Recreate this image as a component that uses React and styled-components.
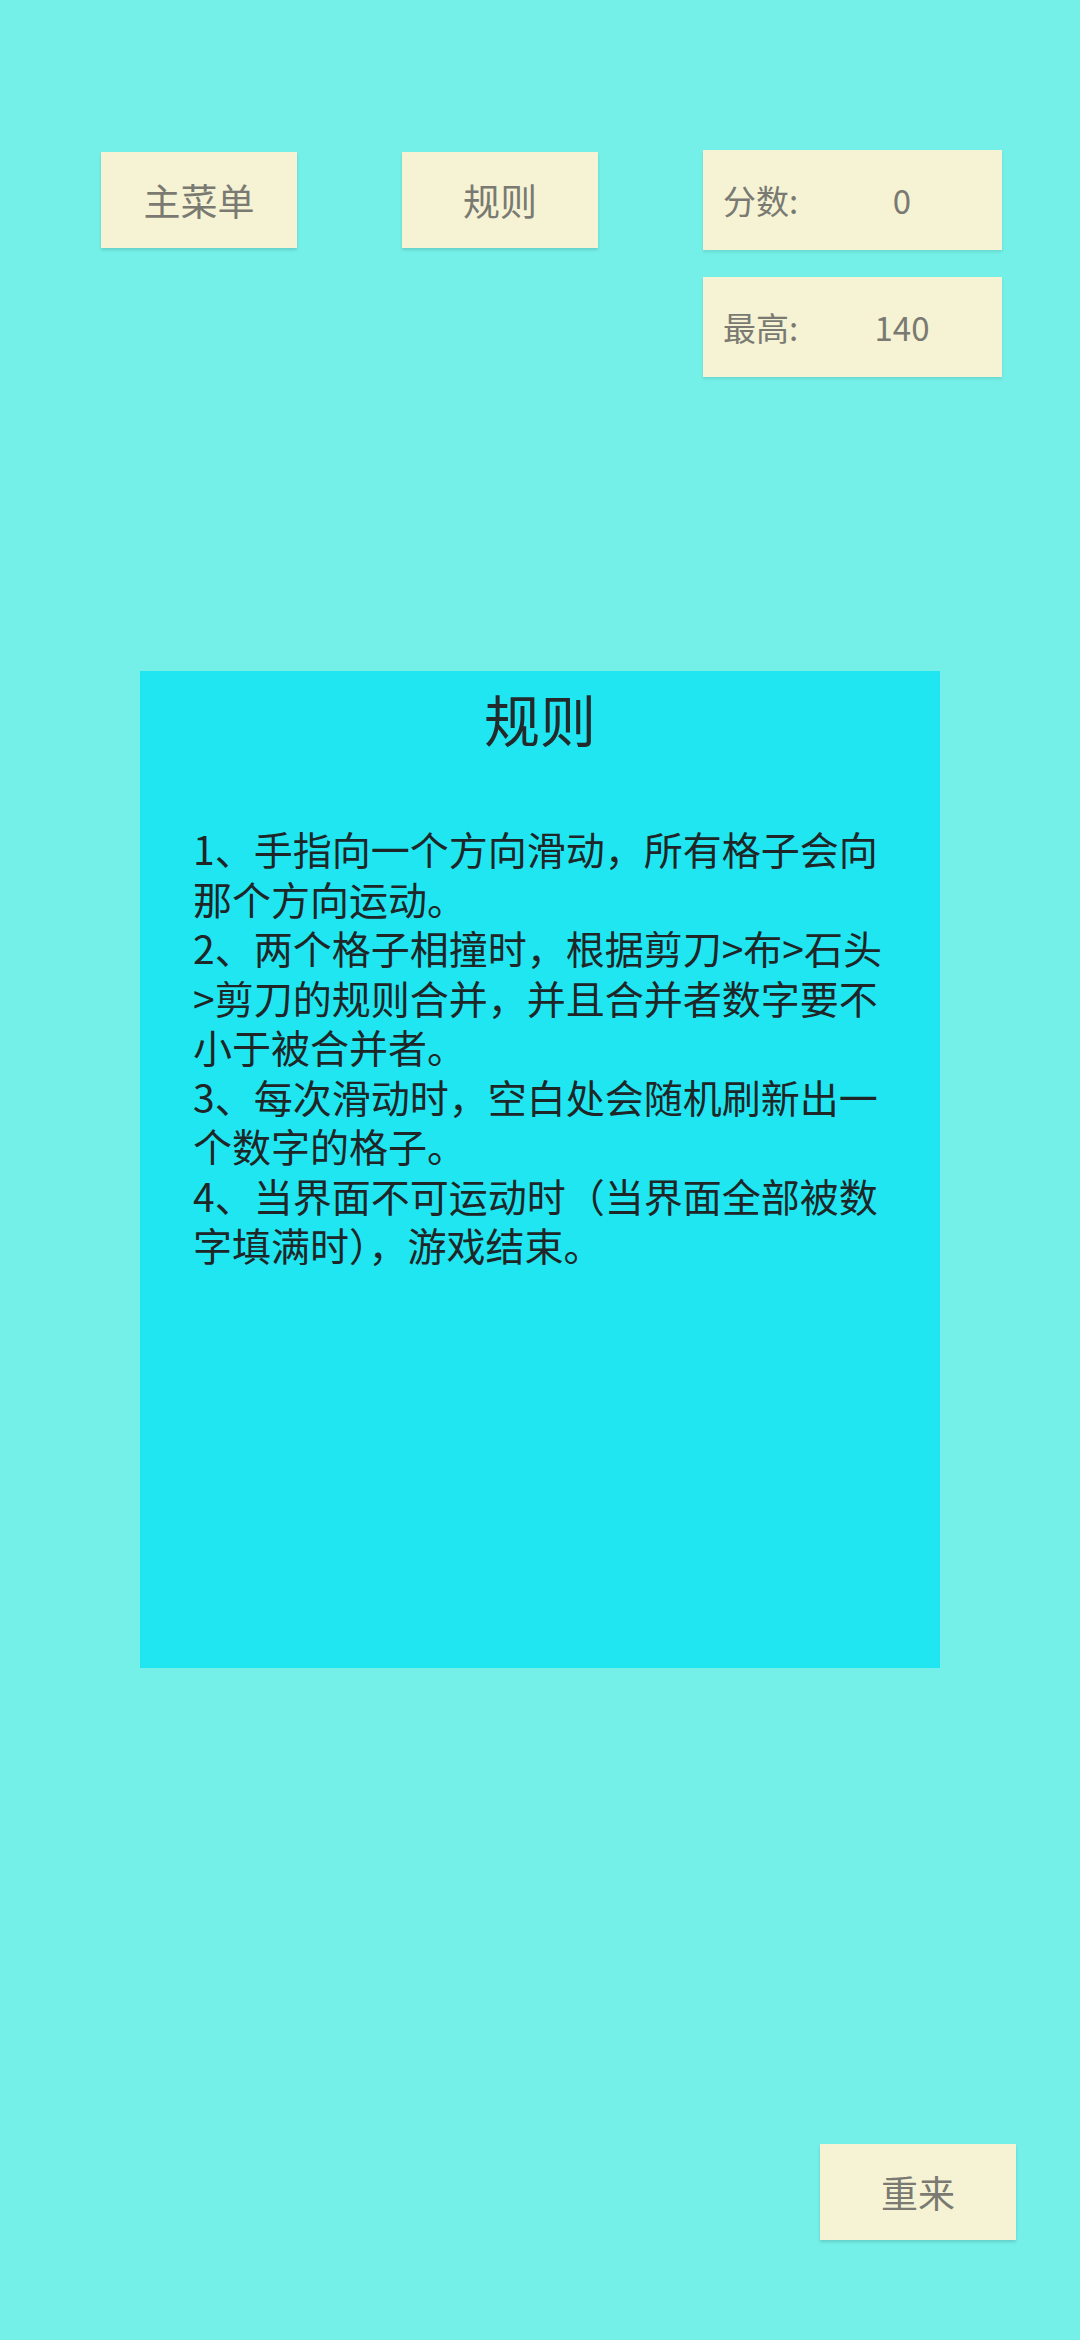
import React from 'react';
import styled, { createGlobalStyle } from 'styled-components';

const GlobalStyle = createGlobalStyle`
  html, body {
    margin: 0;
    padding: 0;
    background-color: #74f0e8;
  }
  body {
    font-family: "Noto Sans CJK SC", "Noto Sans", sans-serif;
  }
`;

const Page = styled.div`
  width: 1080px;
  height: 2340px;
  background-color: #74f0e8;
  display: flex;
  flex-direction: column;
  overflow: hidden;
`;

const Header = styled.div`
  display: flex;
  align-items: flex-start;
  gap: 105px;
  padding: 150px 0 0 101px;
`;

const Button = styled.div`
  width: 196px;
  height: 96px;
  margin-top: 2px;
  background-color: #f5f3d4;
  box-shadow: 0 2px 3px rgba(0, 0, 0, 0.14);
  color: #7a7a72;
  font-size: 37px;
  display: flex;
  align-items: center;
  justify-content: center;
`;

const ScoreColumn = styled.div`
  display: flex;
  flex-direction: column;
  gap: 27px;
`;

const ScoreBox = styled.div`
  width: 299px;
  height: 100px;
  background-color: #f5f3d4;
  box-shadow: 0 2px 3px rgba(0, 0, 0, 0.1);
  color: #7a7a72;
  font-size: 33px;
  display: grid;
  grid-template-columns: 99px 1fr;
  align-items: center;
`;

const ScoreLabel = styled.span`
  padding-left: 20px;
  white-space: nowrap;
`;

const ScoreValue = styled.span`
  text-align: center;
  font-size: 33px;
`;

const Panel = styled.div`
  margin: 294px 0 0 140px;
  width: 800px;
  height: 997px;
  background-color: #1fe6f0;
  box-sizing: border-box;
  padding: 12px 0 0 53px;
`;

const PanelTitle = styled.div`
  margin-left: -53px;
  text-align: center;
  font-size: 56px;
  line-height: 70px;
  color: #222a2c;
`;

const RuleText = styled.div`
  margin-top: 71px;
  width: 700px;
  font-size: 39px;
  line-height: 49.5px;
  color: #1f2628;
`;

const Footer = styled.div`
  display: flex;
  justify-content: flex-end;
  padding: 474px 64px 0 0;
`;

const rules = [
  '1、手指向一个方向滑动，所有格子会向那个方向运动。',
  '2、两个格子相撞时，根据剪刀>布>石头>剪刀的规则合并，并且合并者数字要不小于被合并者。',
  '3、每次滑动时，空白处会随机刷新出一个数字的格子。',
  '4、当界面不可运动时（当界面全部被数字填满时），游戏结束。',
];

const App = () => (
  <Page>
    <GlobalStyle />
    <Header>
      <Button>主菜单</Button>
      <Button>规则</Button>
      <ScoreColumn>
        <ScoreBox>
          <ScoreLabel>分数:</ScoreLabel>
          <ScoreValue>0</ScoreValue>
        </ScoreBox>
        <ScoreBox>
          <ScoreLabel>最高:</ScoreLabel>
          <ScoreValue>140</ScoreValue>
        </ScoreBox>
      </ScoreColumn>
    </Header>

    <Panel>
      <PanelTitle>规则</PanelTitle>
      <RuleText>
        {rules.map((r) => (
          <div key={r}>{r}</div>
        ))}
      </RuleText>
    </Panel>

    <Footer>
      <Button>重来</Button>
    </Footer>
  </Page>
);

export default App;
